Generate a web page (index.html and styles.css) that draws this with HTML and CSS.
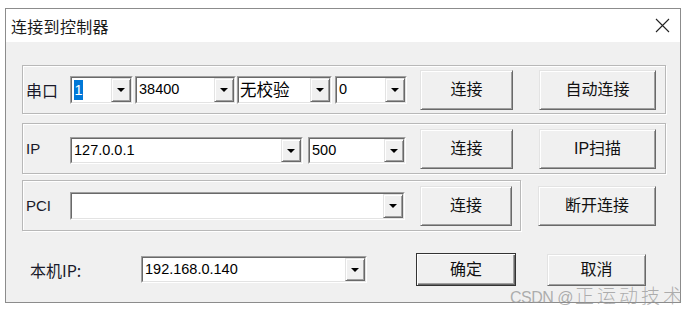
FILE: index.html
```html
<!DOCTYPE html>
<html lang="zh-CN">
<head>
<meta charset="utf-8">
<title>连接到控制器</title>
<link rel="stylesheet" href="styles.css">
</head>
<body>
<div class="window">
  <div class="titlebar">
    <span class="title">连接到控制器</span>
    <svg class="close" width="15" height="15" viewBox="0 0 15 15"><path d="M1 1L14 14M14 1L1 14" stroke="#222" stroke-width="1.1" fill="none"/></svg>
  </div>
  <div class="client">
    <div class="group g-wide g1">
      <span class="label cjk">串口</span>
      <div class="combo w63"><div class="ci"><span class="val"><span class="hl">1</span></span><span class="drop"></span></div></div>
      <div class="combo w101 ml2"><div class="ci"><span class="val">38400</span><span class="drop"></span></div></div>
      <div class="combo w95 ml1"><div class="ci"><span class="val cjk">无校验</span><span class="drop"></span></div></div>
      <div class="combo w72 ml3"><div class="ci"><span class="val">0</span><span class="drop"></span></div></div>
      <div class="btn w93 ml13">连接</div>
      <div class="btn w117 ml26">自动连接</div>
    </div>
    <div class="group g-wide g2">
      <span class="label">IP</span>
      <div class="combo w233 low"><div class="ci"><span class="val">127.0.0.1</span><span class="drop"></span></div></div>
      <div class="combo w98 ml5 low"><div class="ci"><span class="val">500</span><span class="drop"></span></div></div>
      <div class="btn w93 ml14">连接</div>
      <div class="btn w117 ml26">IP扫描</div>
    </div>
    <div class="row3">
      <div class="group g3">
        <span class="label">PCI</span>
        <div class="combo w335"><div class="ci"><span class="val"></span><span class="drop"></span></div></div>
        <div class="btn w92 ml15">连接</div>
      </div>
      <div class="btn w118 ml17">断开连接</div>
    </div>
    <div class="bottom">
      <span class="label blabel">本机IP:</span>
      <div class="combo w226"><div class="ci"><span class="val">192.168.0.140</span><span class="drop"></span></div></div>
      <div class="btn default w100 ml49">确定</div>
      <div class="btn w99 ml31 h32">取消</div>
    </div>
  </div>
</div>
<div class="watermark"><span class="wm-lat">CSDN @</span><span class="wm-cjk">正运动技术</span></div>
</body>
</html>
```
FILE: styles.css
```css
html, body {
  margin: 0;
  padding: 0;
  background: #fff;
}
body {
  width: 696px;
  height: 315px;
  position: relative;
  overflow: hidden;
  font-family: "Liberation Sans", "Noto Sans CJK SC", sans-serif;
  color: #111;
}
.window {
  margin: 8px 0 0 5px;
  width: 676px;
  height: 295px;
  box-sizing: border-box;
  border: 1px solid #8c8c8c;
  background: #f0f0f0;
  display: flex;
  flex-direction: column;
}
.titlebar {
  height: 33px;
  flex: none;
  background: #fff;
  display: flex;
  align-items: center;
  justify-content: space-between;
  padding: 0 10px 0 5px;
}
.title {
  font-family: "Noto Sans CJK SC", sans-serif;
  font-size: 16px;
  line-height: 1;
  color: #1a1a1a;
  letter-spacing: 0.3px;
  margin-top: 1px;
}
.close { display: block; }
.client {
  flex: 1;
  padding: 23px 0 0 16px;
  display: flex;
  flex-direction: column;
}
.group {
  box-sizing: border-box;
  border: 1px solid #b8b8b8;
  box-shadow: inset 1px 1px #fff, 1px 1px #fff;
  display: flex;
  align-items: center;
  padding-left: 3px;
}
.g-wide { width: 644px; }
.g1 { height: 49px; }
.g2 { height: 51px; margin-top: 9px; }
.row3 {
  display: flex;
  align-items: center;
  margin-top: 6px;
}
.g3 { width: 499px; height: 51px; }
.label {
  width: 44px;
  flex: none;
  font-size: 15px;
  line-height: 1;
  color: #1a1a2a;
}
.label.cjk { font-family: "Noto Sans CJK SC", sans-serif; font-size: 16px; }
.combo {
  box-sizing: border-box;
  height: 28px;
  flex: none;
  border: 1px solid;
  border-color: #a0a0a0 #fff #fff #a0a0a0;
}
.combo.low { height: 27px; margin-top: 4px; }
.ci {
  box-sizing: border-box;
  height: 100%;
  border: 1px solid;
  border-color: #696969 #e3e3e3 #e3e3e3 #696969;
  background: #fff;
  display: flex;
}
.val {
  flex: 1;
  padding-left: 2px;
  display: flex;
  align-items: center;
  font-size: 14.5px;
  line-height: 1;
  color: #000;
  white-space: nowrap;
  overflow: hidden;
}
.val.cjk { font-family: "Noto Sans CJK SC", sans-serif; font-size: 16.5px; padding-left: 1px; }
.hl {
  display: inline-block;
  width: 9px;
  height: 20px;
  line-height: 20px;
  background: #0078d7;
  color: #fff;
  text-align: center;
}
.drop {
  box-sizing: border-box;
  width: 20px;
  flex: none;
  background: #f0f0f0;
  border: 1px solid;
  border-color: #e3e3e3 #696969 #696969 #e3e3e3;
  box-shadow: inset 1px 1px #fff, inset -1px -1px #a0a0a0;
  display: flex;
  align-items: center;
  justify-content: center;
}
.drop::after {
  content: "";
  width: 8px;
  height: 4px;
  background: #000;
  clip-path: polygon(0 0, 100% 0, 50% 100%);
  margin-top: 1px;
}
.btn {
  box-sizing: border-box;
  height: 40px;
  flex: none;
  border: 1px solid;
  border-color: #e3e3e3 #696969 #696969 #e3e3e3;
  box-shadow: inset 1px 1px #fff, inset -1px -1px #a0a0a0;
  background: #f0f0f0;
  display: flex;
  align-items: center;
  justify-content: center;
  font-family: "Liberation Sans", "Noto Sans CJK SC", sans-serif;
  font-size: 16px;
  line-height: 1;
  color: #111;
}
.btn.default {
  height: 33px;
  border-color: #333;
  box-shadow: inset 1px 1px #fff, inset -1px -1px #696969, inset -2px -2px #a0a0a0;
}
.btn.h32 { height: 32px; }
.bottom {
  display: flex;
  align-items: center;
  margin: 22px 0 0 8px;
  height: 33px;
}
.blabel {
  width: 111px;
  font-family: "Noto Sans CJK SC", sans-serif;
  font-size: 16px;
}
.bottom .combo { height: 27px; }
.w63 { width: 63px; }
.w72 { width: 72px; }
.w92 { width: 92px; }
.w93 { width: 93px; }
.w95 { width: 95px; }
.w98 { width: 98px; }
.w99 { width: 99px; }
.w100 { width: 100px; }
.w101 { width: 101px; }
.w117 { width: 117px; }
.w118 { width: 118px; }
.w226 { width: 226px; }
.w233 { width: 233px; }
.w335 { width: 335px; }
.ml1 { margin-left: 1px; }
.ml2 { margin-left: 2px; }
.ml3 { margin-left: 3px; }
.ml5 { margin-left: 5px; }
.ml13 { margin-left: 13px; }
.ml14 { margin-left: 14px; }
.ml15 { margin-left: 15px; }
.ml17 { margin-left: 17px; }
.ml26 { margin-left: 26px; }
.ml31 { margin-left: 31px; }
.ml49 { margin-left: 49px; }
.watermark {
  position: absolute;
  left: 510px;
  top: 285px;
  color: rgba(150, 150, 150, 0.75);
  line-height: 1;
  white-space: nowrap;
  display: flex;
  align-items: baseline;
}
.wm-lat {
  font-family: "Liberation Sans", sans-serif;
  font-size: 16px;
  letter-spacing: -0.5px;
  margin-right: 2px;
}
.wm-cjk {
  font-family: "Noto Sans CJK SC", sans-serif;
  font-weight: 300;
  font-size: 19px;
  letter-spacing: 3px;
}
```
